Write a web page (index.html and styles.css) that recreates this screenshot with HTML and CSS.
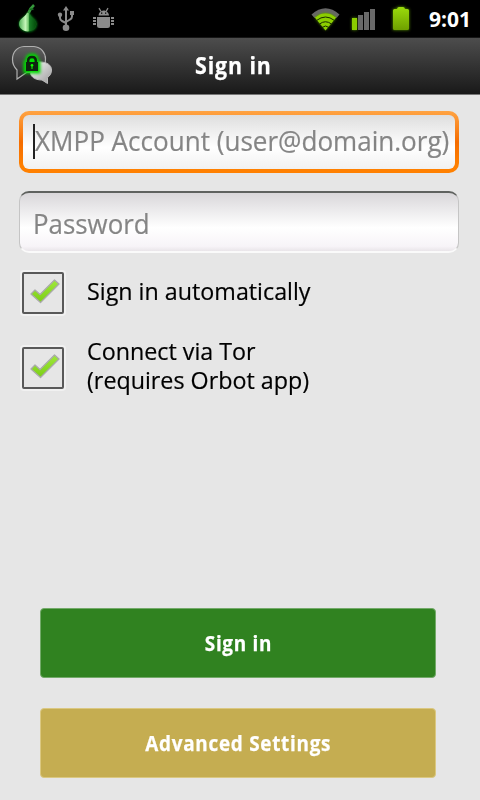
FILE: index.html
```html
<!DOCTYPE html>
<html lang="en">
<head>
<meta charset="utf-8">
<title>Sign in</title>
<link rel="stylesheet" href="styles.css">
</head>
<body>
<header class="status">
  <svg width="130" height="37" viewBox="0 0 130 37">
    <defs>
      <linearGradient id="onion" x1="0" x2="1"><stop offset="0" stop-color="#4fae55"/><stop offset=".38" stop-color="#c4f5b8"/><stop offset=".55" stop-color="#77ca72"/><stop offset=".62" stop-color="#177b24"/><stop offset="1" stop-color="#034b0a"/></linearGradient>
      <filter id="soft" x="-50%" y="-50%" width="200%" height="200%"><feGaussianBlur stdDeviation="1.2"/></filter>
    </defs>
    <path d="M27 13C25 17 19 18 19 24c0 5 4 8 9 8s9-3 9-8c0-5-6-7-7-11z" fill="#087716" filter="url(#soft)"/>
    <path d="M27 12.500C26 17 19 18 19 24c0 4 4 7 8.500 7.500 5-.5 8.500-3.500 8.500-7.500 0-5-6-7-6-10.500z" fill="url(#onion)"/>
    <path d="M28.500 13c1-3 2-5 5.500-8" stroke="#36983c" stroke-width="2.800" fill="none"/>
    <path d="M29.500 9.500q2-1 4 0" stroke="#176d20" stroke-width="1.500" fill="none"/>
    <g fill="none" stroke="#8b8b8b" stroke-width="2">
      <path d="M66 28V9M60 15v3q0 2 2 3l4 2M72 14v2.500q0 2-2 3l-4 2.500"/>
    </g>
    <g fill="#8b8b8b"><path d="M63 10.500L66 6l3 4.500z"/><circle cx="66" cy="27.700" r="3.300"/><circle cx="60" cy="14.800" r="2.200"/><path d="M70 11h4v4h-4z"/>
      <path d="M98.500 15.500c.3-2.800 2-5 5-5s5.200 2.200 5.500 5z"/>
      <path d="M97 17h13v8.500q0 2.500-2.500 2.500h-8q-2.500 0-2.500-2.500z"/>
      <path d="M93 17h3v2h-3zM93 20h3v2h-3zM93 23h3v2h-3zM111 17h3v2h-3zM111 20h3v2h-3zM111 23h3v2h-3z"/>
    </g>
    <path d="M101 11.500l-2-3.300M106 11.500l2-3.300" stroke="#8b8b8b" stroke-width="1.300"/>
    <path d="M101 12.500h1.300v1.300H101zM105 12.500h1.300v1.300H105z" fill="#000"/>
  </svg>
  <svg class="radios" width="129" height="37" viewBox="300 0 129 37">
    <defs>
      <linearGradient id="lime" x1="0" y1="0" x2="0" y2="1"><stop offset="0" stop-color="#9bdc0b"/><stop offset="1" stop-color="#6fa000"/></linearGradient>
      <filter id="glow" x="-50%" y="-50%" width="200%" height="200%"><feGaussianBlur stdDeviation="1.500"/></filter>
    </defs>
    <path d="M311.500 14.500Q325.500 2 339.500 14.500L336.500 18Q325.500 9 314.500 18z" fill="#666"/>
    <path d="M315 17.500Q325.500 9 336 17.500L325.500 30z" fill="#5a9700" filter="url(#glow)"/>
    <path d="M314.800 17.500Q325.500 9 336.200 17.500L325.500 30.500z" fill="#8bce00"/>
    <path d="M316.500 20.500Q325.500 13.500 334.500 20.500M319.500 24Q325.500 19.500 331.500 24M322 27.500Q325.500 24.500 329 27.500" fill="none" stroke="#172900" stroke-width="1"/>
    <path d="M352 18h5v12h-5z" fill="#5a9700" filter="url(#glow)"/>
    <path d="M352 18h5v12h-5z" fill="#8bce00"/>
    <path d="M358 15h5v15h-5zM364 12h5v18h-5zM370 9h5v21h-5z" fill="#696969"/>
    <path d="M393 9h4V7h8v2h4v21h-16z" fill="#5a9700" filter="url(#glow)"/>
    <path d="M393 10.500q0-1.500 1.500-1.500H397q.5-2 2-2h4q1.500 0 2 2h2.500q1.500 0 1.500 1.500v18q0 1.500-1.500 1.500h-13q-1.500 0-1.500-1.500z" fill="url(#lime)"/>
  </svg>
  <span class="clock">9:01</span>
</header>
<div class="titlebar">
  <svg class="logo" width="60" height="56" viewBox="0 38 60 56">
    <defs>
      <linearGradient id="bubble" x1="0" y1="0" x2="0" y2="1"><stop offset="0" stop-color="#606060"/><stop offset="1" stop-color="#292929"/></linearGradient>
      <linearGradient id="small" x1="0" y1="0" x2="1" y2="1"><stop offset="0" stop-color="#fff"/><stop offset="1" stop-color="#999"/></linearGradient>
      <filter id="neon" x="-50%" y="-50%" width="200%" height="200%"><feGaussianBlur stdDeviation="1.500"/></filter>
    </defs>
    <path d="M24 46.500H34C41 47 45.500 53 45.500 59c0 8-5 13-13 13.500h-6L17 79V70C14 67 12.500 64 12.500 59.500 12.500 52 17 47 24 46.500z" fill="url(#bubble)" stroke="#b0b0b0" stroke-width="1.200"/>
    <path d="M40 62c7 0 11.500 3 11.500 8 0 4-2 6-4 7.500v6L42 80c-8 0-12-4-12-9s4-9 10-9z" fill="url(#small)" stroke="#bbb" stroke-width="1"/>
    <path d="M27 62v-3q0-4 5-4t5 4v3h2v10H25V62z" fill="#00e000" stroke="#00d800" stroke-width="3" filter="url(#neon)"/>
    <path d="M28.200 63v-2.500q0-3.500 3.800-3.500t3.800 3.500V63" fill="none" stroke="#0a260b" stroke-width="2.500"/>
    <path d="M26 62h12v9H26z" fill="#0f2410"/>
    <circle cx="32" cy="65.300" r="1.300" fill="#1f0"/><path d="M31.500 66h1v3h-1z" fill="#1f0"/>
  </svg>
  <h1 class="title"><span class="fit">Sign in</span></h1>
</div>
<main class="form">
  <div class="field focused"><span class="caret"></span><span class="hint account fit">XMPP Account (user@domain.org)</span></div>
  <div class="field plain"><span class="hint password fit">Password</span></div>
  <label class="option">
    <span class="box"><svg width="30" height="26" viewBox="0 0 30 26"><path d="M1 15L5 11 10 15.500 24.500 1 29 5 10.500 23.500z" fill="url(#tick)" stroke="#aaa" stroke-width="1.300" stroke-linejoin="round"/><defs><linearGradient id="tick" x1="0" y1="0" x2="0" y2="1"><stop offset="0" stop-color="#a0e83c"/><stop offset="1" stop-color="#7bce16"/></linearGradient></defs></svg></span>
    <span class="label fit">Sign in automatically</span>
  </label>
  <label class="option tor">
    <span class="box"><svg width="30" height="26" viewBox="0 0 30 26"><path d="M1 15L5 11 10 15.500 24.500 1 29 5 10.500 23.500z" fill="url(#tick)" stroke="#aaa" stroke-width="1.300" stroke-linejoin="round"/></svg></span>
    <span class="label fit">Connect via Tor<br>(requires Orbot app)</span>
  </label>
  <div class="actions">
    <button class="btn green"><span class="fit">Sign in</span></button>
    <button class="btn gold"><span class="fit">Advanced Settings</span></button>
  </div>
</main>
</body>
</html>
```
FILE: styles.css
```css
* { box-sizing: border-box; }
body { margin: 0; width: 480px; height: 800px; display: flex; flex-direction: column; overflow: hidden; background: #e6e6e6; font-family: "Open Sans", "Noto Sans", sans-serif; }
.fit { display: inline-block; white-space: nowrap; transform-origin: 0 50%; }
.status { height: 37px; flex: none; background: #000; display: flex; }
.radios { margin-left: 170px; }
.clock { padding-top: 4px; width: 50px; line-height: 30px; font-size: 21px; font-weight: 700; color: #fff; }
.titlebar { height: 58px; flex: none; display: flex; background: linear-gradient(#4d4d4d, #191919); border-top: 1px solid #161616; border-bottom: 1px solid #777; color: #fff; }
.title { margin: 0 0 0 135px; font-size: 24px; line-height: 53px; font-weight: 700; }
.title .fit { letter-spacing: 1px; transform: scaleX(.89); -webkit-text-stroke: .25px; }
.form { flex: 1; padding: 16px 21px 0 19px; }
.field { height: 62px; display: flex; align-items: center; border-radius: 10px; font-size: 27px; color: #858585; position: relative; }
.focused { border: 4px solid transparent; background: linear-gradient(#dedede, #fff 60%, #f1f1f1) padding-box, linear-gradient(#ffa342, #f56d00 50%, #ff8000 90%) border-box; }
.hint, .label { -webkit-text-stroke: .2px; }
.caret { position: absolute; left: 10px; top: 9px; width: 2px; height: 35px; background: #222; }
.hint { line-height: 36px; }
.account { margin: 0 0 2px 12px; transform: scaleX(.965); }
.plain { margin-top: 18px; border: solid; border-width: 2px 1px 2px; border-color: #5f625f #c5c5c5 #fafafa; background: linear-gradient(#d9d7da, #fff 60%, #f7f4f8 92%, #e9e5e9); }
.password { margin: 4px 0 0 13px; transform: scaleX(.958); }
.option { margin-top: 18px; height: 44px; display: flex; align-items: center; }
.box { margin-left: 3px; flex: none; width: 42px; height: 42px; border: 2px solid #595959; border-radius: 2px; box-shadow: 0 0 0 2px #f1f1f1; display: flex; align-items: center; justify-content: center; margin-right: 23px; }
.box svg { flex: none; margin: -2px 0 0 3px; }
.label { font-size: 24px; line-height: 29px; color: #000; transform: scaleX(.97); margin-bottom: 6px; }
.tor { height: 60px; margin-top: 23px; }
.actions { margin: 210px 23px 0 21px; display: grid; gap: 30px; }
.btn { height: 70px; padding: 0 0 0 1px; border-radius: 4px; font: 700 21px "Open Sans", sans-serif; color: #fff; }
.btn .fit { letter-spacing: .8px; transform-origin: 50% 50%; transform: scaleX(.9); -webkit-text-stroke: .25px; }
.green { background: #308220; border: 1px solid #73aa69; }
.gold { background: #c5ad51; border: 1px solid #dbc881; }
```
